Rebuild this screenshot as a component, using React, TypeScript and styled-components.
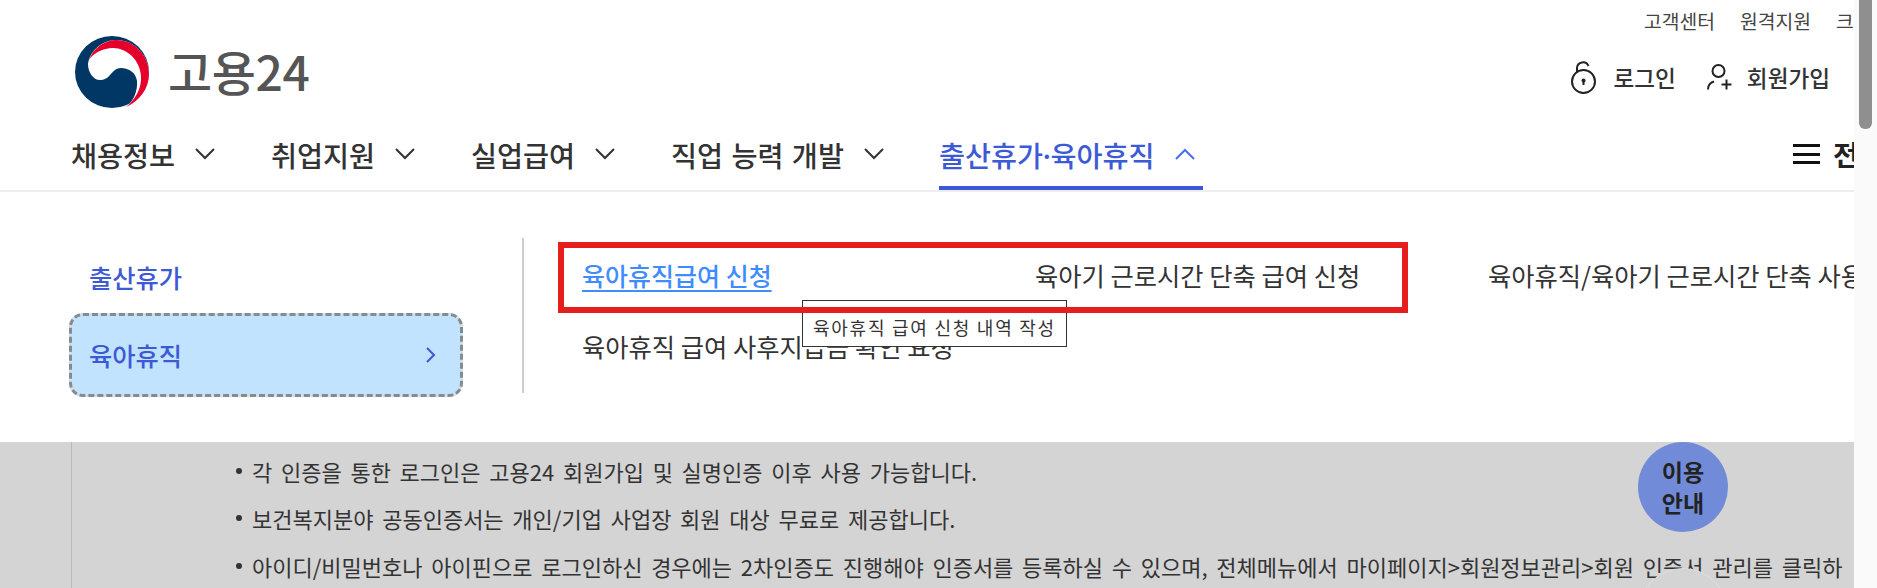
import React from "react";
import styled, { createGlobalStyle } from "styled-components";

const GlobalStyle = createGlobalStyle`
    html, body {
        margin: 0;
        padding: 0;
        height: 588px;
        overflow: hidden;
        background: #fff;
    }
    body {
        font-family: "Noto Sans CJK KR", "Noto Sans", sans-serif;
        color: #333;
    }
`;

const Page = styled.div`
    display: flex;
    width: 1877px;
    height: 588px;
    overflow: hidden;
`;

const Content = styled.div`
    width: 1854px;
    height: 588px;
    flex: none;
    overflow: hidden;
    position: relative;
`;

const ScrollTrack = styled.div`
    flex: 1;
    background: #fafafa;
    padding-left: 5px;
`;

const ScrollThumb = styled.div`
    width: 13px;
    height: 129px;
    background: #8f8f8f;
    border-radius: 0 0 6px 6px;
`;

const Header = styled.header`
    height: 190px;
    border-bottom: 2px solid #eee;
    display: flex;
    flex-direction: column;
`;

const UtilRow = styled.div`
    height: 42px;
    display: flex;
    align-items: center;
    white-space: nowrap;
    padding-left: 1644px;
    font-size: 19.3px;
    color: #444;
`;

const UtilSep = styled.span`
    width: 1px;
    height: 15px;
    background: #ddd;
    margin: 0 11px 0 14px;
`;

const LogoRow = styled.div`
    height: 56px;
    display: flex;
    align-items: center;
    justify-content: space-between;
    padding: 0 24px 0 75px;
`;

const Logo = styled.div`
    display: flex;
    align-items: center;
    gap: 18px;
    font-size: 48px;
    font-weight: 500;
    color: #555;
    letter-spacing: -0.4px;
    line-height: 1;

    svg {
        margin-top: 4px;
    }
`;

const AuthLinks = styled.div`
    display: flex;
    align-items: center;
    padding-top: 14px;
    font-size: 22.6px;
    font-weight: 500;
    color: #333;
    white-space: nowrap;
`;

const AuthLink = styled.span<{ $gap: number; $left?: number }>`
    display: flex;
    align-items: center;
    gap: ${(props) => props.$gap}px;
    margin-left: ${(props) => props.$left || 0}px;
`;

const NavRow = styled.nav`
    flex: 1;
    display: flex;
    align-items: stretch;
    padding-left: 71px;
    position: relative;
`;

const NavItem = styled.div<{ $active?: boolean; $width: number }>`
    width: ${(props) => props.$width}px;
    flex: none;
    display: flex;
    align-items: center;
    gap: 20px;
    font-size: 28.3px;
    font-weight: 500;
    word-spacing: 2px;
    white-space: nowrap;
    color: ${(props) => (props.$active ? "#3d5ad6" : "#333")};
    border-bottom: 4px solid ${(props) => (props.$active ? "#3d5ad6" : "transparent")};
    padding-top: 24px;
`;

const NavDot = styled.span`
    margin: 0 -4.5px;
`;

const AllMenu = styled.div`
    position: absolute;
    left: 1793px;
    top: 24px;
    bottom: 4px;
    display: flex;
    align-items: center;
    gap: 13px;
    font-size: 28px;
    font-weight: 700;
    color: #222;
    white-space: nowrap;
`;

const MegaMenu = styled.div`
    height: 250px;
    display: flex;
    position: relative;
`;

const SideMenu = styled.div`
    width: 522px;
    flex: none;
    padding: 65px 0 0 69px;
    box-sizing: border-box;
`;

const SideLabel = styled.div`
    font-size: 25.3px;
    font-weight: 500;
    color: #3d5ad6;
    padding-left: 20px;
    line-height: 40px;
`;

const SideActive = styled.div`
    width: 394px;
    height: 84px;
    margin-top: 16px;
    box-sizing: border-box;
    background: #c1e3fe;
    border: 3px dashed #8a8a8a;
    border-radius: 14px;
    display: flex;
    align-items: center;
    justify-content: space-between;
    padding: 0 24px 0 17px;
    font-size: 25.3px;
    font-weight: 500;
    color: #3d5ad6;
`;

const Divider = styled.div`
    width: 2px;
    height: 155px;
    margin-top: 46px;
    background: #ccc;
    flex: none;
`;

const LinkGrid = styled.div`
    flex: 1;
    min-width: 0;
    padding: 47px 0 0 58px;
    position: relative;
`;

const LinkRow = styled.div`
    display: flex;
    height: 71px;
    align-items: center;
    white-space: nowrap;
    font-size: 25.3px;
    color: #333;
`;

const LinkCell = styled.span<{ $width?: number; $current?: boolean }>`
    width: ${(props) => (props.$width ? `${props.$width}px` : "auto")};
    flex: none;
    font-size: ${(props) => (props.$current ? "25px" : "inherit")};
    font-weight: ${(props) => (props.$current ? 500 : 400)};
    color: ${(props) => (props.$current ? "#3f8cff" : "#333")};
`;

const CurrentText = styled.span`
    text-decoration: underline;
    text-underline-offset: 4px;
    text-decoration-thickness: 2px;
`;

const RedBox = styled.div`
    position: absolute;
    left: 558px;
    top: 50px;
    width: 850px;
    height: 71px;
    box-sizing: border-box;
    border: 6px solid #e61e1e;
    z-index: 3;
`;

const Tooltip = styled.div`
    position: absolute;
    left: 802px;
    top: 108px;
    width: 265px;
    height: 47px;
    box-sizing: border-box;
    border: 1px solid #333;
    background: #fff;
    padding: 14px 0 0 10px;
    font-size: 18px;
    line-height: 24px;
    letter-spacing: 1.75px;
    color: #333;
    white-space: nowrap;
    z-index: 2;
`;

const Notice = styled.div`
    height: 146px;
    background: #d4d4d4;
    position: relative;
`;

const NoticeRule = styled.div`
    position: absolute;
    left: 71px;
    top: 0;
    bottom: 0;
    width: 1px;
    background: #bbb;
`;

const NoticeList = styled.ul`
    list-style: none;
    margin: 0;
    padding: 5px 0 0 236px;
`;

const NoticeItem = styled.li`
    height: 47.5px;
    display: flex;
    align-items: center;
    gap: 10px;
    font-size: 22px;
    word-spacing: 3.8px;
    white-space: nowrap;
    color: #333;

    &::before {
        content: "";
        width: 6px;
        height: 6px;
        border-radius: 50%;
        background: #333;
        flex: none;
    }
`;

const GuideBadge = styled.div`
    position: absolute;
    left: 1638px;
    top: 0;
    width: 90px;
    height: 90px;
    border-radius: 50%;
    background: #728bd8;
    display: flex;
    align-items: center;
    justify-content: center;
    text-align: center;
    font-size: 23px;
    font-weight: 700;
    line-height: 31px;
    color: #222;
`;

const TopButton = styled.div`
    position: absolute;
    left: 1638px;
    top: 126px;
    width: 90px;
    height: 90px;
    box-sizing: border-box;
    border-radius: 50%;
    background: #d4d4d4;
    border: 1px solid #e0e0e0;
`;

const Chevron: React.FC<{ up?: boolean; color?: string }> = ({ up, color = "#333" }) => (
    <svg width="20" height="12" viewBox="0 0 20 12" fill="none" stroke={color} strokeWidth="2">
        <path d={up ? "M1 11 10 2l9 9" : "M1 1l9 9 9-9"} />
    </svg>
);

const Taegeuk: React.FC = () => (
    <svg width="75" height="72" viewBox="0 0 75 72">
        <ellipse cx="37" cy="36" rx="37" ry="36" fill="#003764" />
        <path
            d="M13 28C15 14 28 4 41 4c19 0 33 16 33 34 0 14-9 27-23 33 7-5 12-16 11-26-1-8-8-13-16-13-6 0-8 4-11 7-3 4-7 5-10 5-7 0-12-8-12-16z"
            fill="#fff"
        />
        <path
            d="M14 24C18 12 30 4 41 4c19 0 33 16 33 34 0 14-9 27-23 33 9-7 16-19 15-31C65 24 52 12 38 12c-10 0-20 5-24 12z"
            fill="#e4002b"
        />
    </svg>
);

const LockIcon: React.FC = () => (
    <svg width="25" height="33" viewBox="0 0 25 33" fill="none" stroke="#222" strokeWidth="2">
        <circle cx="12.5" cy="20.5" r="11.5" />
        <path d="M6 11V7a6 6 0 0 1 11.5-2" />
        <circle cx="12.5" cy="19.5" r="2" fill="#222" stroke="none" />
        <path d="M12.5 20v4" />
    </svg>
);

const JoinIcon: React.FC = () => (
    <svg width="26" height="26" viewBox="0 0 26 26" fill="none" stroke="#222" strokeWidth="2">
        <circle cx="11.5" cy="7" r="6" />
        <path d="M1 25.5c0-4 2.5-7 6-8" />
        <path d="M14.5 20.5h10M19.5 15.5v10" />
    </svg>
);

const MenuIcon: React.FC = () => (
    <svg width="27" height="20" viewBox="0 0 27 20" fill="#111">
        <rect y="0" width="27" height="3" />
        <rect y="9" width="27" height="3" />
        <rect y="17" width="27" height="3" />
    </svg>
);

const App: React.FC = () => {
    return (
        <Page>
            <GlobalStyle />
            <Content>
                <Header>
                    <UtilRow>
                        고객센터
                        <UtilSep />
                        원격지원
                        <UtilSep />
                        크롬 설치
                    </UtilRow>
                    <LogoRow>
                        <Logo>
                            <Taegeuk />
                            고용24
                        </Logo>
                        <AuthLinks>
                            <AuthLink $gap={17}>
                                <LockIcon />
                                로그인
                            </AuthLink>
                            <AuthLink $gap={14} $left={31}>
                                <JoinIcon />
                                회원가입
                            </AuthLink>
                        </AuthLinks>
                    </LogoRow>
                    <NavRow>
                        <NavItem $width={200}>채용정보<Chevron /></NavItem>
                        <NavItem $width={200}>취업지원<Chevron /></NavItem>
                        <NavItem $width={200}>실업급여<Chevron /></NavItem>
                        <NavItem $width={268}>직업 능력 개발<Chevron /></NavItem>
                        <NavItem $width={264} $active>
                            <span>출산휴가<NavDot>·</NavDot>육아휴직</span>
                            <Chevron up color="#4a6cf0" />
                        </NavItem>
                        <AllMenu><MenuIcon />전체메뉴</AllMenu>
                    </NavRow>
                </Header>
                <MegaMenu>
                    <SideMenu>
                        <SideLabel>출산휴가</SideLabel>
                        <SideActive>
                            육아휴직
                            <svg width="10" height="16" viewBox="0 0 10 16" fill="none" stroke="#3d5ad6" strokeWidth="2">
                                <path d="M1 1l7 7-7 7" />
                            </svg>
                        </SideActive>
                    </SideMenu>
                    <Divider />
                    <LinkGrid>
                        <LinkRow>
                            <LinkCell $width={453} $current><CurrentText>육아휴직급여 신청</CurrentText></LinkCell>
                            <LinkCell $width={453}>육아기 근로시간 단축 급여 신청</LinkCell>
                            <LinkCell>육아휴직/육아기 근로시간 단축 사용</LinkCell>
                        </LinkRow>
                        <LinkRow>
                            <LinkCell>육아휴직 급여 사후지급금 확인 요청</LinkCell>
                        </LinkRow>
                    </LinkGrid>
                    <RedBox />
                    <Tooltip>육아휴직 급여 신청 내역 작성</Tooltip>
                </MegaMenu>
                <Notice>
                    <NoticeRule />
                    <NoticeList>
                        <NoticeItem>각 인증을 통한 로그인은 고용24 회원가입 및 실명인증 이후 사용 가능합니다.</NoticeItem>
                        <NoticeItem>보건복지분야 공동인증서는 개인/기업 사업장 회원 대상 무료로 제공합니다.</NoticeItem>
                        <NoticeItem>아이디/비밀번호나 아이핀으로 로그인하신 경우에는 2차인증도 진행해야 인증서를 등록하실 수 있으며, 전체메뉴에서 마이페이지&gt;회원정보관리&gt;회원 인증서 관리를 클릭하</NoticeItem>
                    </NoticeList>
                    <GuideBadge>이용<br />안내</GuideBadge>
                    <TopButton />
                </Notice>
            </Content>
            <ScrollTrack>
                <ScrollThumb />
            </ScrollTrack>
        </Page>
    );
};

export default App;
